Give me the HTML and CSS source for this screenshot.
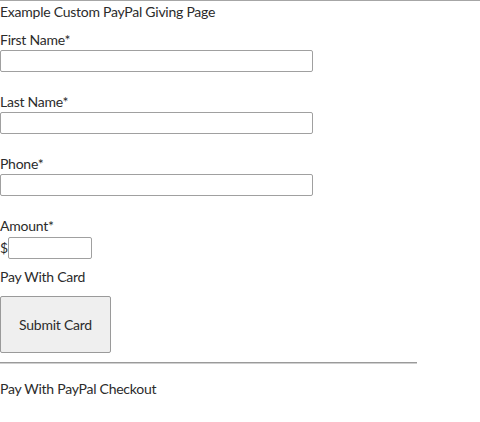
FILE: index.html
```html
<!DOCTYPE html>
<html>
<head>
<meta charset="utf-8">
<link rel="stylesheet" href="styles.css">
</head>
<body>
<div class="page">
  <p class="title">Example Custom PayPal Giving Page</p>
  <form class="form">
    <div class="field">
      <label class="label">First Name*</label>
      <input class="input wide" type="text">
    </div>
    <div class="field">
      <label class="label">Last Name*</label>
      <input class="input wide" type="text">
    </div>
    <div class="field">
      <label class="label">Phone*</label>
      <input class="input wide" type="text">
    </div>
    <div class="field amount">
      <label class="label">Amount*</label>
      <div class="amount-row"><span class="dollar">$</span><input class="input small" type="text"></div>
    </div>
    <p class="section">Pay With Card</p>
    <button class="btn" type="button">Submit Card</button>
  </form>
  <hr class="rule">
  <p class="section paypal">Pay With PayPal Checkout</p>
</div>
</body>
</html>
```
FILE: styles.css
```css
html, body {
  margin: 0;
  padding: 0;
  background: #fff;
}
body {
  font-family: Lato, "Open Sans", sans-serif;
  font-size: 14px;
  letter-spacing: -0.25px;
  color: #2b2b2b;
}
.page {
  border-top: 1px solid #a6a6a6;
}
.title {
  margin: 0;
  line-height: 20px;
  padding-top: 1px;
}
.form {
  display: flex;
  flex-direction: column;
  align-items: flex-start;
  margin-top: 8px;
}
.field {
  display: flex;
  flex-direction: column;
  align-items: flex-start;
  margin-bottom: 20px;
}
.label {
  line-height: 20px;
}
.input {
  box-sizing: border-box;
  height: 22px;
  border: 1px solid #a0a0a0;
  border-radius: 2px;
  margin: 0;
  padding: 1px 2px;
  font-family: inherit;
  font-size: 13px;
  background: #fff;
}
.wide {
  width: 313px;
}
.amount {
  margin-bottom: 8px;
}
.amount-row {
  display: flex;
  align-items: center;
  margin-top: 1px;
}
.dollar {
  line-height: 20px;
}
.small {
  width: 84px;
}
.section {
  margin: 0;
  line-height: 20px;
}
.btn {
  margin-top: 9px;
  width: 111px;
  height: 57px;
  box-sizing: border-box;
  background: #efefef;
  border: 1px solid #9a9a9a;
  border-radius: 2px;
  font-family: inherit;
  font-size: 14px;
  letter-spacing: -0.25px;
  color: #2b2b2b;
  padding: 0;
}
.rule {
  width: 417px;
  margin: 9px 0 0 0;
  border: 0;
  border-top: 1px solid #9a9a9a;
  border-bottom: 1px solid #cfcfcf;
  height: 0;
}
.paypal {
  margin-top: 15px;
}
```
